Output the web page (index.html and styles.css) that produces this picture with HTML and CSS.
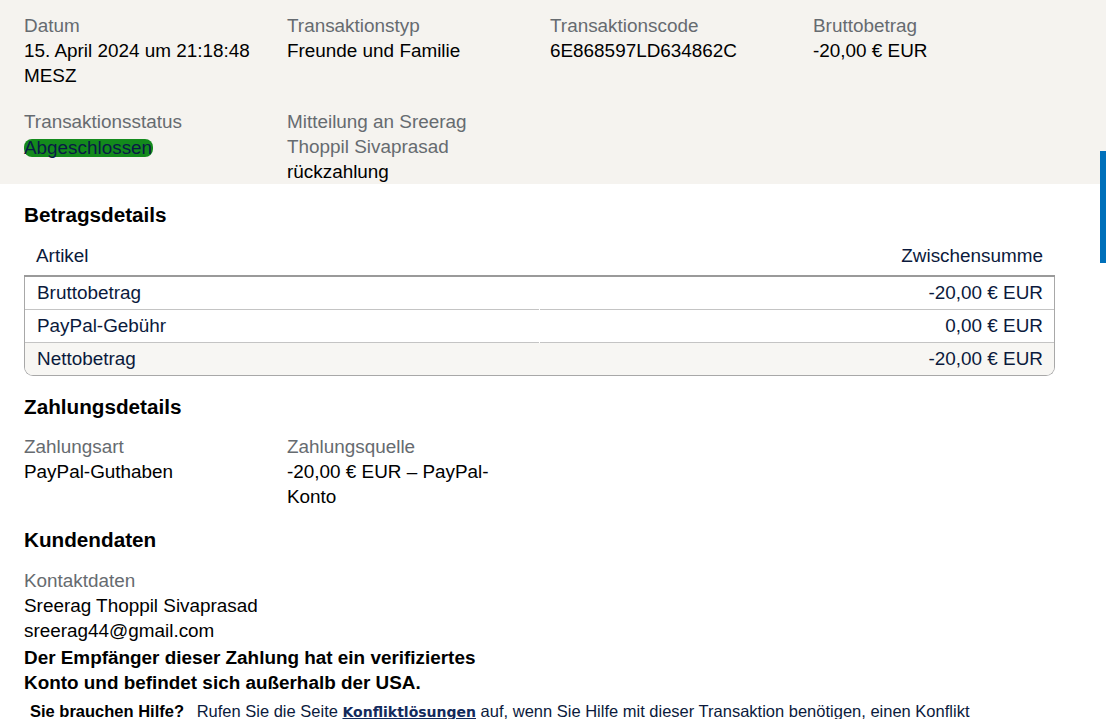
FILE: index.html
```html
<!DOCTYPE html>
<html lang="de">
  <head>
    <meta charset="UTF-8" />
    <meta name="viewport" content="width=device-width, initial-scale=1.0" />
    <title>Transaktionsdetails</title>
    <link rel="stylesheet" href="styles.css">
  </head>
  <body>
    <div class="summary">
      <div class="field">
        <div class="label">Datum</div>
        <div class="value">15. April 2024 um 21:18:48 MESZ</div>
      </div>
      <div class="field">
        <div class="label">Transaktionstyp</div>
        <div class="value">Freunde und Familie</div>
      </div>
      <div class="field">
        <div class="label">Transaktionscode</div>
        <div class="value">6E868597LD634862C</div>
      </div>
      <div class="field">
        <div class="label">Bruttobetrag</div>
        <div class="value">-20,00 € EUR</div>
      </div>
      <div class="field">
        <div class="label">Transaktionsstatus</div>
        <div class="value"><span class="status">Abgeschlossen</span></div>
      </div>
      <div class="field">
        <div class="label">Mitteilung an Sreerag Thoppil Sivaprasad</div>
        <div class="value">rückzahlung</div>
      </div>
    </div>

    <div class="content">
      <h3>Betragsdetails</h3>
      <div class="amounts">
        <div class="amounts-head">
          <span>Artikel</span>
          <span>Zwischensumme</span>
        </div>
        <div class="amounts-body">
          <div class="amount-row">
            <div class="cell">Bruttobetrag</div>
            <div class="cell num">-20,00 € EUR</div>
          </div>
          <div class="amount-row">
            <div class="cell">PayPal-Gebühr</div>
            <div class="cell num">0,00 € EUR</div>
          </div>
          <div class="amount-row total">
            <div class="cell">Nettobetrag</div>
            <div class="cell num">-20,00 € EUR</div>
          </div>
        </div>
      </div>

      <h3>Zahlungsdetails</h3>
      <div class="fields">
        <div class="field">
          <div class="label">Zahlungsart</div>
          <div class="value">PayPal-Guthaben</div>
        </div>
        <div class="field">
          <div class="label">Zahlungsquelle</div>
          <div class="value">-20,00 € EUR – PayPal-Konto</div>
        </div>
      </div>

      <h3>Kundendaten</h3>
      <div class="label">Kontaktdaten</div>
      <div class="value">Sreerag Thoppil Sivaprasad</div>
      <div class="value">sreerag44@gmail.com</div>
      <p class="notice">Der Empfänger dieser Zahlung hat ein verifiziertes Konto und befindet sich außerhalb der USA.</p>

      <p class="help"><strong>Sie brauchen Hilfe?</strong> Rufen Sie die Seite <a href="#">Konfliktlösungen</a> auf, wenn Sie Hilfe mit dieser Transaktion benötigen, einen Konflikt melden oder einen Antrag stellen möchten.</p>
    </div>

    <div class="feedback-tab"></div>
  </body>
</html>
```

FILE: styles.css
```css
body {
  font-family: "Liberation Sans", Arial, sans-serif;
  font-size: 18.9px;
  line-height: 25px;
  color: #000;
  background-color: #fff;
  margin: 0;
  padding: 0;
}
.summary {
  background-color: #f5f3ef;
  padding: 13px 24px 0;
  display: grid;
  grid-template-columns: repeat(4, 236px);
  column-gap: 27px;
  row-gap: 21px;
}
.label {
  color: #666b70;
}
.value {
  color: #000;
}
.status {
  display: inline-block;
  background-color: #138a1c;
  color: #0a1a45;
  border-radius: 8px;
  line-height: 18px;
  padding: 0 1px 0 0;
  vertical-align: middle;
}
.content {
  padding: 0 24px;
}
h3 {
  font-size: 20.7px;
  line-height: 25px;
  font-weight: bold;
  margin: 18px 0 0;
}
.amounts {
  margin-top: 9px;
  width: 1031px;
  color: #0b1a3c;
}
.amounts-head {
  display: flex;
  justify-content: space-between;
  padding: 7px 12px 7px;
  border-bottom: 2px solid #9a9a9a;
}
.amounts-body {
  border: 1px solid #a8a8a8;
  border-top: none;
  border-radius: 0 0 9px 9px;
  overflow: hidden;
}
.amount-row {
  display: grid;
  grid-template-columns: 1fr 1fr;
  column-gap: 1px;
}
.cell {
  padding: 0 11px 0 12px;
  line-height: 32px;
  border-bottom: 1px solid #c4c4c4;
}
.cell.num {
  text-align: right;
}
.amount-row.total {
  background-color: #f7f6f3;
}
.amount-row.total .cell {
  border-bottom: none;
}
.fields {
  display: grid;
  grid-template-columns: repeat(4, 236px);
  column-gap: 27px;
  margin-top: 15px;
}
.content > .label {
  margin-top: 16px;
}
.notice {
  font-weight: bold;
  max-width: 480px;
  margin: 2px 0 0;
}
.help {
  font-size: 16.5px;
  line-height: 22px;
  margin: 5px 0 0;
  padding-left: 6px;
  max-width: 980px;
  color: #0b1a3c;
}
.help strong {
  color: #000;
  margin-right: 8px;
}
.help a {
  font-family: "DejaVu Sans", Verdana, sans-serif;
  font-weight: bold;
  font-size: 14px;
  color: #132a5c;
  text-decoration: underline;
  text-underline-offset: 1px;
}
.feedback-tab {
  position: fixed;
  right: 0;
  top: 151px;
  width: 6px;
  height: 112px;
  background-color: #0070ba;
}
```
